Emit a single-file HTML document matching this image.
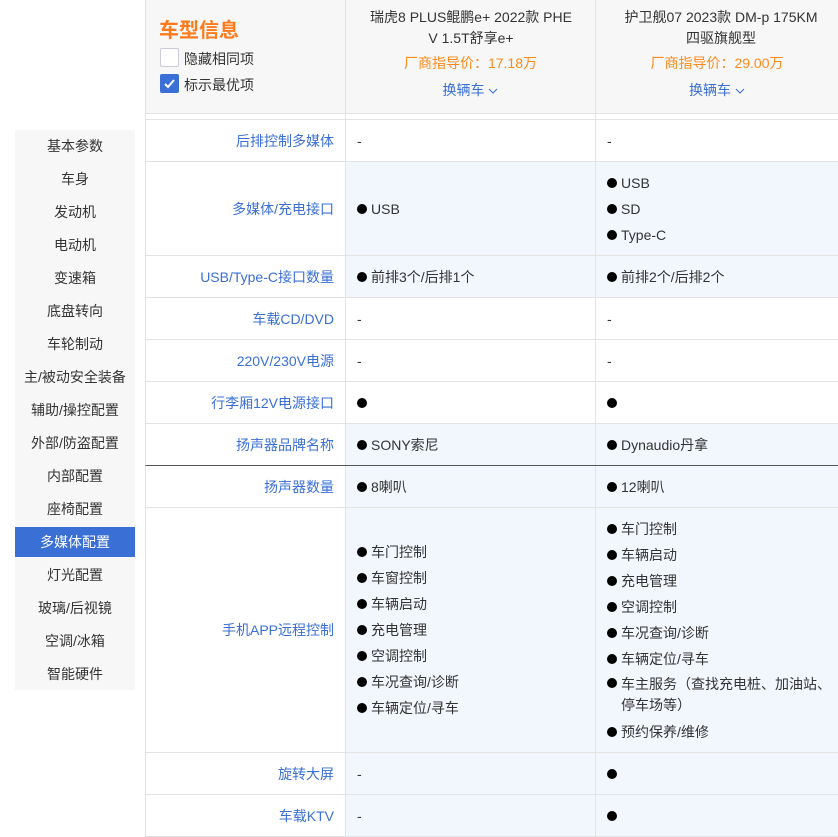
<!DOCTYPE html>
<html><head><meta charset="utf-8"><style>
*{margin:0;padding:0;box-sizing:border-box}
body{width:838px;height:835px;overflow:hidden;background:#fff;font-family:"Liberation Sans","Noto Sans CJK SC",sans-serif;font-size:14px;color:#333;position:relative}
.a{position:absolute}
.side{left:15px;top:130px;width:120px;height:560px;background:#f7f7f7}
.side div{height:33px;line-height:33px;text-align:center;color:#333}
.side div.on{background:#3a6fd6;color:#fff;height:30px;line-height:30px;margin:1px 0 2px}
.hdr{left:145px;top:0;width:693px;height:114px;background:#f7f7f7;border-left:1px solid #e3e3e3;border-bottom:1px solid #e3e3e3}
.row{position:absolute;left:145px;width:693px;border-left:1px solid #e3e3e3;border-bottom:1px solid #e3e3e3}
.row .l{position:absolute;left:0;top:0;bottom:0;width:200px;display:flex;align-items:center;justify-content:flex-end;padding-right:12px;color:#3a6fd6;background:#fff}
.row .c{position:absolute;top:0;bottom:0;display:flex;flex-direction:column;justify-content:center;padding-left:11px;border-left:1px solid #e3e3e3}
.row .c1{left:199px;width:250px}
.row .c2{left:449px;width:244px;padding-right:6px}
.b .c{background:#f2f6fd}
.it{line-height:26px;position:relative;padding-left:14px}
.it:before{content:"";position:absolute;left:0;top:8px;width:10px;height:10px;border-radius:50%;background:#000}
.it.w{line-height:21px;padding-top:2px;padding-bottom:3px}
.it.w:before{top:6px}
.chk{width:19px;height:19px;border:1px solid #ccd;border-radius:2px;background:#fff}
.chk.on{background:#3a6fd6;border-color:#3a6fd6}
.vline{width:1px;background:#e3e3e3}
</style></head><body>
<div class="a side">
<div>基本参数</div><div>车身</div><div>发动机</div><div>电动机</div><div>变速箱</div><div>底盘转向</div><div>车轮制动</div><div>主/被动安全装备</div><div>辅助/操控配置</div><div>外部/防盗配置</div><div>内部配置</div><div>座椅配置</div><div class="on">多媒体配置</div><div>灯光配置</div><div>玻璃/后视镜</div><div>空调/冰箱</div><div>智能硬件</div>
</div>
<div class="a hdr"></div>
<div class="a vline" style="left:345px;top:0;height:120px"></div>
<div class="a vline" style="left:595px;top:0;height:120px"></div>
<div class="a" style="left:159px;top:14px;font-size:20px;font-weight:bold;color:#ff7a1a">车型信息</div>
<div class="a chk" style="left:160px;top:48px"></div>
<div class="a" style="left:184px;top:49px">隐藏相同项</div>
<div class="a chk on" style="left:160px;top:74px"><svg width="17" height="17" viewBox="0 0 17 17"><path d="M4 9l3 3 6-7" stroke="#fff" stroke-width="2" fill="none"/></svg></div>
<div class="a" style="left:184px;top:75px">标示最优项</div>
<div class="a" style="left:366px;top:7px;width:210px;text-align:center;line-height:21px;word-break:break-all">瑞虎8 PLUS鲲鹏e+ 2022款 PHEV 1.5T舒享e+</div>
<div class="a" style="left:346px;top:53px;width:249px;text-align:center;color:#ff8a1a">厂商指导价：17.18万</div>
<div class="a" style="left:346px;top:80px;width:249px;text-align:center;color:#3a6fd6">换辆车 <svg width="10" height="8" viewBox="0 0 10 8"><path d="M1 2l4 4 4-4" stroke="#3a6fd6" fill="none"/></svg></div>
<div class="a" style="left:616px;top:7px;width:210px;text-align:center;line-height:21px">护卫舰07 2023款 DM-p 175KM 四驱旗舰型</div>
<div class="a" style="left:596px;top:53px;width:242px;text-align:center;color:#ff8a1a">厂商指导价：29.00万</div>
<div class="a" style="left:596px;top:80px;width:242px;text-align:center;color:#3a6fd6">换辆车 <svg width="10" height="8" viewBox="0 0 10 8"><path d="M1 2l4 4 4-4" stroke="#3a6fd6" fill="none"/></svg></div>
<div class="row" style="top:114px;height:6px"></div>

<div class="row" style="top:120px;height:42px"><div class="l">后排控制多媒体</div><div class="c c1">-</div><div class="c c2">-</div></div>
<div class="row b" style="top:162px;height:94px"><div class="l">多媒体/充电接口</div><div class="c c1"><div class="it">USB</div></div><div class="c c2"><div class="it">USB</div><div class="it">SD</div><div class="it">Type-C</div></div></div>
<div class="row b" style="top:256px;height:42px"><div class="l">USB/Type-C接口数量</div><div class="c c1"><div class="it">前排3个/后排1个</div></div><div class="c c2"><div class="it">前排2个/后排2个</div></div></div>
<div class="row" style="top:298px;height:42px"><div class="l">车载CD/DVD</div><div class="c c1">-</div><div class="c c2">-</div></div>
<div class="row" style="top:340px;height:42px"><div class="l">220V/230V电源</div><div class="c c1">-</div><div class="c c2">-</div></div>
<div class="row" style="top:382px;height:42px"><div class="l">行李厢12V电源接口</div><div class="c c1"><div class="it">&nbsp;</div></div><div class="c c2"><div class="it">&nbsp;</div></div></div>
<div class="row b" style="top:424px;height:42px;border-bottom:1px solid #555"><div class="l">扬声器品牌名称</div><div class="c c1"><div class="it">SONY索尼</div></div><div class="c c2"><div class="it">Dynaudio丹拿</div></div></div>
<div class="row b" style="top:466px;height:42px"><div class="l">扬声器数量</div><div class="c c1"><div class="it">8喇叭</div></div><div class="c c2"><div class="it">12喇叭</div></div></div>
<div class="row b" style="top:508px;height:245px"><div class="l">手机APP远程控制</div><div class="c c1"><div class="it">车门控制</div><div class="it">车窗控制</div><div class="it">车辆启动</div><div class="it">充电管理</div><div class="it">空调控制</div><div class="it">车况查询/诊断</div><div class="it">车辆定位/寻车</div></div><div class="c c2"><div class="it">车门控制</div><div class="it">车辆启动</div><div class="it">充电管理</div><div class="it">空调控制</div><div class="it">车况查询/诊断</div><div class="it">车辆定位/寻车</div><div class="it w">车主服务（查找充电桩、加油站、停车场等）</div><div class="it">预约保养/维修</div></div></div>
<div class="row b" style="top:753px;height:42px"><div class="l">旋转大屏</div><div class="c c1">-</div><div class="c c2"><div class="it">&nbsp;</div></div></div>
<div class="row b" style="top:795px;height:42px"><div class="l">车载KTV</div><div class="c c1">-</div><div class="c c2"><div class="it">&nbsp;</div></div></div>
</body></html>
